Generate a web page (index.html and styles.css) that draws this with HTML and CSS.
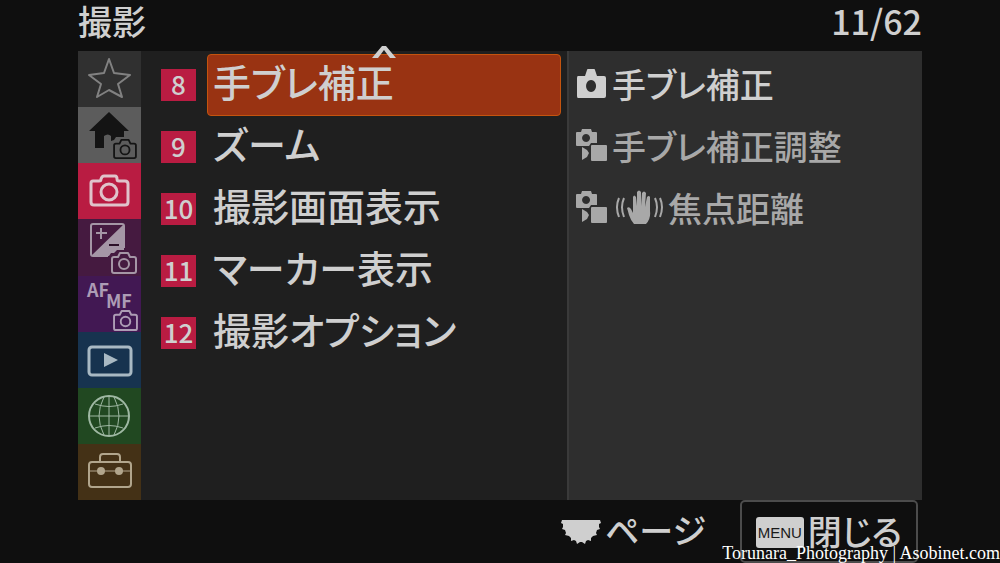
FILE: index.html
```html
<!DOCTYPE html>
<html lang="ja">
<head>
    <meta charset="UTF-8">
    <title>撮影</title>
    <link rel="stylesheet" href="styles.css">
</head>
<body>
<!-- shared icons -->
<svg class="defs" aria-hidden="true">
    <symbol id="cam" viewBox="0 0 26 22">
        <path d="M3 5h4l2-4h8l2 4h4q2 0 2 2v12q0 2-2 2H3q-2 0-2-2V7q0-2 2-2z"/>
        <circle cx="13" cy="12" r="5"/>
    </symbol>
    <symbol id="combo" viewBox="0 0 32 32">
        <path fill-rule="evenodd" d="M1 3h4l1-3h9l1 3h4q1 0 1 1v10h-6l-2 3H1q-1 0-1-1V4q0-1 1-1zM10 5a4 4 0 1 0 .1 0z"/>
        <path d="M6 18l5 3 2 3-2 4-5 3z"/>
        <rect x="15" y="16" width="16" height="16" rx="1"/>
    </symbol>
</svg>

<header class="top">
    <h1 class="title">撮影</h1>
    <span class="count">11/62</span>
</header>

<main class="panel">
    <nav class="tabs">
        <button class="tab star" aria-label="マイメニュー">
            <svg viewBox="0 0 63 56"><path d="M31 8l5 14 16 2-12 9 4 13-13-7-12 7 4-13-12-9 15-2z"/></svg>
        </button>
        <button class="tab home" aria-label="メイン">
            <svg viewBox="0 0 63 56">
                <path class="fill" d="M31 5l20 19h-5v6h-8l-2 3-3 1v-5q-3-3-7 0v12H17V24h-6z"/>
                <use href="#cam" x="35" y="32" width="24" height="20"/>
            </svg>
        </button>
        <button class="tab shoot" aria-label="撮影" aria-current="page">
            <svg viewBox="0 0 63 56">
                <path d="M15 18h6q2 0 2-2 1-3 3-3h11q2 0 2 3 0 2 2 2h6q3 0 3 3v18q0 3-3 3H16q-3 0-3-3V20q0-2 2-2z"/>
                <circle cx="31" cy="29" r="8"/>
            </svg>
        </button>
        <button class="tab expo" aria-label="露出/色">
            <svg viewBox="0 0 63 56">
                <path class="fill" d="M46 5v26h-7l-3 3h-3l-2 3H13z"/>
                <path d="M30 37H15q-2 0-2-2V7q0-2 2-2h29q2 0 2 2v22M18 14h11M23 9v11"/>
                <path class="dark" d="M31 26h10"/>
                <use href="#cam" x="32" y="33" width="28" height="22"/>
            </svg>
        </button>
        <button class="tab focus" aria-label="フォーカス">
            <svg viewBox="0 0 63 56">
                <text x="9" y="21">AF</text>
                <text x="28" y="32">MF</text>
                <use href="#cam" x="34" y="34" width="27" height="21"/>
            </svg>
        </button>
        <button class="tab play" aria-label="再生">
            <svg viewBox="0 0 63 56">
                <rect x="11" y="15" width="42" height="28" rx="3"/>
                <path class="fill" d="M26 21l14 7-14 7z"/>
            </svg>
        </button>
        <button class="tab net" aria-label="ネットワーク">
            <svg viewBox="0 0 63 56">
                <circle cx="31" cy="28" r="20"/>
                <path class="thin" d="M31 8v40M11 28h40M17 16q14 5 28 0M17 40q14-5 28 0M26 9q-10 19 0 38M36 9q10 19 0 38"/>
            </svg>
        </button>
        <button class="tab setup" aria-label="セットアップ">
            <svg viewBox="0 0 63 56">
                <rect x="11" y="18" width="42" height="25" rx="3"/>
                <path d="M22 18v-5q0-3 3-3h14q3 0 3 3v5"/>
                <path class="thin" d="M11 27h42"/>
                <circle class="fill" cx="23" cy="27" r="4"/>
                <circle class="fill" cx="41" cy="27" r="4"/>
            </svg>
        </button>
    </nav>

    <ul class="groups">
        <li><button class="group"><span class="num">8</span><span class="name on">手ブレ補正
            <svg class="caret" viewBox="0 0 24 12"><path d="M0 12L10 0h4l10 12h-6l-6-8-6 8z"/></svg></span></button></li>
        <li><button class="group"><span class="num">9</span><span class="name">ズーム</span></button></li>
        <li><button class="group"><span class="num">10</span><span class="name">撮影画面表示</span></button></li>
        <li><button class="group"><span class="num">11</span><span class="name">マーカー表示</span></button></li>
        <li><button class="group"><span class="num">12</span><span class="name">撮影オプション</span></button></li>
    </ul>

    <ul class="items">
        <li><button class="item">
            <svg class="icon" viewBox="0 0 32 32"><path fill-rule="evenodd" d="M2 9h7l2-6q0-1 1-1h6q1 0 1 1l2 6h7q2 0 2 2v18q0 2-2 2H2q-1 0-1-2V11q0-2 1-2zM15 13a5 6 0 1 0 .1 0z"/></svg>
            手ブレ補正</button></li>
        <li><button class="item dim"><svg class="icon"><use href="#combo"/></svg>手ブレ補正調整</button></li>
        <li><button class="item dim"><svg class="icon"><use href="#combo"/></svg>
            <svg class="hand" viewBox="0 0 48 34">
                <path d="M18 34q-3-3-5-9-1-4-2-7 2-2 4 1l2 4V7q1-3 3 0l1 9V2q2-3 4 0v14l1-13q2-3 4 0l-1 14 2-10q2-2 3 0v14q1 8-4 13z"/>
                <path class="wave" d="M8 8q-4 9 0 19M3 8q-4 9 0 19M39 8q4 9 0 19M44 8q4 9 0 19"/>
            </svg>焦点距離</button></li>
    </ul>
</main>

<footer class="bottom">
    <span class="page">
        <svg class="dial" viewBox="0 0 40 24"><path d="M1 0h38l1 3-2 1v3l1 2-3 1-1 3 1 2-4 1-2 2v3l-3-1-2 1-1 3-3-2h-2l-3 2-1-3-2-1-3 1v-3l-2-2-4-1 1-2-1-3-3-1 1-2V4L0 3z"/></svg>
        ページ
    </span>
    <button class="close"><span class="menu">MENU</span>閉じる</button>
</footer>
<div class="credit">Torunara_Photography | Asobinet.com</div>
</body>
</html>
```
FILE: styles.css
```css
* {
    box-sizing: border-box;
    margin: 0;
    padding: 0;
}

body {
    display: flex;
    flex-direction: column;
    min-height: 100vh;
    padding: 0 78px;
    background: #0f0f0f;
    color: #cfcfcf;
    font-family: "Noto Sans CJK JP", sans-serif;
    font-size: 34px;
    font-weight: 500;
    font-feature-settings: "palt";
}

button {
    border: 0;
    background: none;
    color: inherit;
    font: inherit;
    font-feature-settings: inherit;
    text-align: left;
    cursor: pointer;
}

ul {
    list-style: none;
}

svg {
    flex: none;
    fill: currentColor;
}

.defs {
    position: absolute;
    width: 0;
    height: 0;
}

.top {
    display: flex;
    justify-content: space-between;
    height: 51px;
    line-height: 42px;
}

.title {
    font-size: 34px;
    font-weight: 500;
}

.panel {
    display: grid;
    flex: 1;
    grid-template-columns: 63px 6fr 5fr;
    background: #1f1f1f;
}

/* left tabs */
.tabs {
    display: flex;
    flex-direction: column;
}

.tab {
    display: flex;
    flex: 1;
    align-items: center;
}

.tab svg {
    width: 63px;
    height: 56px;
    fill: none;
    stroke: currentColor;
    stroke-width: 2px;
    stroke-linejoin: round;
}

.tab .fill {
    fill: currentColor;
    stroke: none;
}

.tab .thin {
    stroke-width: 1px;
}

.tab .dark {
    stroke: #2c1029;
}

.tab text {
    fill: currentColor;
    stroke: none;
    font-family: "Noto Sans CJK JP", sans-serif;
    font-size: 18px;
    font-weight: 700;
}

.star {
    background: #303030;
    color: #818181;
}

.home {
    background: #5c5c5c;
    color: #141414;
}

.shoot {
    background: #b91c42;
    color: #e0c3cb;
}

.expo {
    background: #451a40;
    color: #a596a6;
}

.focus {
    background: #421853;
    color: #ad9cb5;
}

.play {
    background: #17334f;
    color: #a9b9c3;
}

.net {
    background: #214821;
    color: #9fb8a3;
}

.setup {
    background: #443116;
    color: #b1a58c;
}

.tab.shoot svg,
.tab.play svg {
    stroke-width: 3px;
}

/* group list */
.groups {
    padding: 3px 6px 0 20px;
}

.group {
    display: flex;
    align-items: center;
    gap: 11px;
    width: 100%;
    height: 62px;
    font-size: 38px;
}

.num {
    width: 35px;
    height: 32px;
    background: #b91c42;
    font-size: 26px;
    line-height: 30px;
    text-align: center;
}

.name {
    position: relative;
    flex: 1;
    height: 62px;
    padding-left: 5px;
    border: 1px solid transparent;
    border-radius: 4px;
    line-height: 52px;
}

.on {
    border-color: #c4540f;
    background: #993312;
}

.caret {
    position: absolute;
    top: -9px;
    left: 50%;
    width: 24px;
    height: 12px;
    margin-left: -12px;
}

/* items of the chosen group */
.items {
    padding: 3px 0 0 7px;
    border-left: 2px solid #3a3a3a;
    background: #2e2e2e;
}

.item {
    display: flex;
    align-items: center;
    gap: 4px;
    height: 62px;
    padding-bottom: 4px;
}

.dim {
    color: #a8a8a8;
}

.icon {
    width: 32px;
    height: 32px;
}

.hand {
    width: 48px;
    height: 34px;
    margin-left: 4px;
}

.wave {
    fill: none;
    stroke: currentColor;
    stroke-width: 2px;
}

/* footer */
.bottom {
    display: flex;
    justify-content: flex-end;
    gap: 34px;
    height: 63px;
    padding-right: 4px;
}

.page,
.close {
    display: flex;
    align-items: center;
    gap: 4px;
    padding-bottom: 4px;
}

.dial {
    width: 40px;
    height: 24px;
    margin-top: 4px;
}

.close {
    padding: 0 14px 2px;
    border: 2px solid #4c4c4c;
    border-radius: 5px;
}

.menu {
    margin-top: 4px;
    padding: 0 2px;
    border-radius: 3px;
    background: #cfcfcf;
    color: #1a1a1a;
    font-family: "Liberation Sans", sans-serif;
    font-size: 15px;
    line-height: 31px;
}

.credit {
    position: absolute;
    right: 0;
    bottom: 0;
    color: #fff;
    font-family: "Liberation Serif", serif;
    font-size: 18px;
    font-weight: 400;
    line-height: 20px;
}
```
